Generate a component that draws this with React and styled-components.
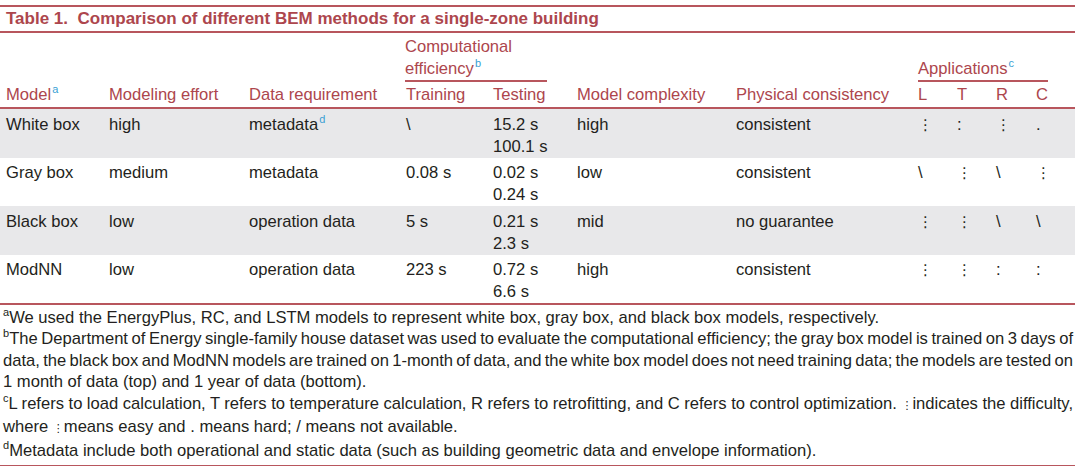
import styled, { createGlobalStyle } from "styled-components"

const rule = "#b8565d"
const headRed = "#ad464d"
const sky = "#3a9fd4"

const GlobalStyle = createGlobalStyle`
  body {
    margin: 0;
    background: #fff;
  }
`

const Page = styled.div`
  width: 1075px;
  padding-top: 5px;
  font-family: "Liberation Sans", Arial, sans-serif;
  font-size: 16.6px;
  color: #231f20;
`

const Title = styled.div`
  border-top: 2px solid ${rule};
  border-bottom: 2px solid ${rule};
  padding: 0 6px;
  font-weight: bold;
  font-size: 17px;
  line-height: 24px;
  color: ${headRed};
  white-space: pre;
`

const Table = styled.table`
  width: 1075px;
  table-layout: fixed;
  border-collapse: separate;
  border-spacing: 0;
  border-bottom: 2px solid ${rule};
`

const HeadCell = styled.th`
  font-weight: normal;
  text-align: left;
  color: ${headRed};
  line-height: 22px;
  vertical-align: bottom;
  padding: ${({ $group }) => ($group ? "2.5px 0 0" : "2px 0 1px")};
  padding-left: ${({ $first }) => ($first ? "6px" : "0")};
  border-bottom: ${({ $group }) => ($group ? "none" : `2px solid ${rule}`)};
  white-space: nowrap;
`

const GroupLabel = styled.div`
  width: ${({ $w }) => $w}px;
  margin-left: ${({ $shift }) => $shift || 0}px;
  padding-bottom: 0.5px;
  border-bottom: 2px solid ${rule};
  white-space: normal;
`

const Row = styled.tr`
  background: ${({ $shaded }) => ($shaded ? "#e8e8ea" : "#fff")};
`

const Cell = styled.td`
  padding: 4.5px 0 0;
  padding-left: ${({ $first }) => ($first ? "6px" : "0")};
  line-height: 22px;
  vertical-align: top;
  white-space: nowrap;
`

const Mark = styled.td`
  padding: 4.5px 0 0;
  line-height: 22px;
  vertical-align: top;
  font-family: ${({ $dots }) => ($dots ? '"DejaVu Sans", sans-serif' : '"Liberation Sans", Arial, sans-serif')};
  font-size: ${({ $dots }) => ($dots ? "15px" : "16.6px")};
`

const Sup = styled.sup`
  font-size: 11px;
  line-height: 0;
  vertical-align: 7px;
  color: ${({ $plain }) => ($plain ? "inherit" : sky)};
  margin-left: ${({ $plain }) => ($plain ? "0" : "1px")};
`

const TinyDots = styled.span`
  font-family: "DejaVu Sans", sans-serif;
  font-size: 11px;
`

const Notes = styled.div`
  padding: 1.5px 2px 4px 3px;
  border-bottom: 2px solid ${rule};
  line-height: 21.5px;
`

const Line = styled.span`
  display: block;
  white-space: nowrap;
  text-align: justify;
  text-align-last: ${({ $end }) => ($end ? "left" : "justify")};
  word-spacing: ${({ $end }) => ($end ? "normal" : "-3px")};
`

const rows = [
  { model: "White box", effort: "high", data: "metadata", dataSup: "d", train: "\\", test: ["15.2 s", "100.1 s"], complexity: "high", physics: "consistent", apps: ["⋮", ":", "⋮", "."] },
  { model: "Gray box", effort: "medium", data: "metadata", train: "0.08 s", test: ["0.02 s", "0.24 s"], complexity: "low", physics: "consistent", apps: ["\\", "⋮", "\\", "⋮"] },
  { model: "Black box", effort: "low", data: "operation data", train: "5 s", test: ["0.21 s", "2.3 s"], complexity: "mid", physics: "no guarantee", apps: ["⋮", "⋮", "\\", "\\"] },
  { model: "ModNN", effort: "low", data: "operation data", train: "223 s", test: ["0.72 s", "6.6 s"], complexity: "high", physics: "consistent", apps: ["⋮", "⋮", ":", ":"] },
]

const widths = [109, 140, 157, 87, 84, 159, 182, 39, 39, 40, 39]

const App = () => {
  return (
    <>
      <GlobalStyle />
      <Page>
        <Title>Table 1.  Comparison of different BEM methods for a single-zone building</Title>
        <Table>
          <colgroup>
            {widths.map((w, i) => <col key={i} style={{ width: w }} />)}
          </colgroup>
          <thead>
            <tr>
              <HeadCell rowSpan={2} $first>Model<Sup>a</Sup></HeadCell>
              <HeadCell rowSpan={2}>Modeling effort</HeadCell>
              <HeadCell rowSpan={2}>Data requirement</HeadCell>
              <HeadCell colSpan={2} $group>
                <GroupLabel $w={142} $shift={-1}>Computational efficiency<Sup>b</Sup></GroupLabel>
              </HeadCell>
              <HeadCell rowSpan={2}>Model complexity</HeadCell>
              <HeadCell rowSpan={2}>Physical consistency</HeadCell>
              <HeadCell colSpan={4} $group>
                <GroupLabel $w={130}>Applications<Sup>c</Sup></GroupLabel>
              </HeadCell>
            </tr>
            <tr>
              <HeadCell>Training</HeadCell>
              <HeadCell>Testing</HeadCell>
              <HeadCell>L</HeadCell>
              <HeadCell>T</HeadCell>
              <HeadCell>R</HeadCell>
              <HeadCell>C</HeadCell>
            </tr>
          </thead>
          <tbody>
            {rows.map((r, i) => (
              <Row key={r.model} $shaded={i % 2 === 0}>
                <Cell $first>{r.model}</Cell>
                <Cell>{r.effort}</Cell>
                <Cell>{r.data}{r.dataSup && <Sup>{r.dataSup}</Sup>}</Cell>
                <Cell>{r.train}</Cell>
                <Cell>{r.test[0]}<br />{r.test[1]}</Cell>
                <Cell>{r.complexity}</Cell>
                <Cell>{r.physics}</Cell>
                {r.apps.map((a, j) => (
                  <Mark key={j} $dots={a === "⋮"}>{a}</Mark>
                ))}
              </Row>
            ))}
          </tbody>
        </Table>
        <Notes>
          <Line $end><Sup $plain>a</Sup>We used the EnergyPlus, RC, and LSTM models to represent white box, gray box, and black box models, respectively.</Line>
          <Line><Sup $plain>b</Sup>The Department of Energy single-family house dataset was used to evaluate the computational efficiency; the gray box model is trained on 3 days of</Line>
          <Line>data, the black box and ModNN models are trained on 1-month of data, and the white box model does not need training data; the models are tested on</Line>
          <Line $end>1 month of data (top) and 1 year of data (bottom).</Line>
          <Line><Sup $plain>c</Sup>L refers to load calculation, T refers to temperature calculation, R refers to retrofitting, and C refers to control optimization. <TinyDots>⋮</TinyDots>indicates the difficulty,</Line>
          <Line $end>where <TinyDots>⋮</TinyDots>means easy and . means hard; / means not available.</Line>
          <Line $end><Sup $plain>d</Sup>Metadata include both operational and static data (such as building geometric data and envelope information).</Line>
        </Notes>
      </Page>
    </>
  )
}

export default App
